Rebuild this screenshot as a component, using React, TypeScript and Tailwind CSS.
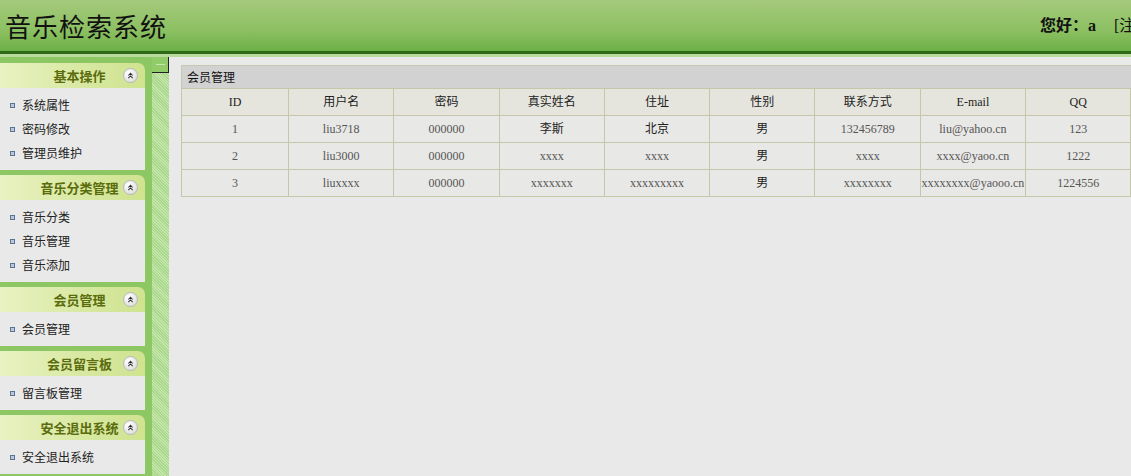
import React from 'react'

const menu = [
  { title: '基本操作', items: ['系统属性', '密码修改', '管理员维护'] },
  { title: '音乐分类管理', items: ['音乐分类', '音乐管理', '音乐添加'] },
  { title: '会员管理', items: ['会员管理'] },
  { title: '会员留言板', items: ['留言板管理'] },
  { title: '安全退出系统', items: ['安全退出系统'] },
]

// last column runs past the window edge, its header is off screen
const columns = ['ID', '用户名', '密码', '真实姓名', '住址', '性别', '联系方式', 'E-mail', 'QQ', '']

const members = [
  ['1', 'liu3718', '000000', '李斯', '北京', '男', '132456789', 'liu@yahoo.cn', '123', ''],
  ['2', 'liu3000', '000000', 'xxxx', 'xxxx', '男', 'xxxx', 'xxxx@yaoo.cn', '1222', ''],
  ['3', 'liuxxxx', '000000', 'xxxxxxx', 'xxxxxxxxx', '男', 'xxxxxxxx', 'xxxxxxxx@yaooo.cn', '1224556', ''],
]

const hasCjk = (s: string) => /[\u4e00-\u9fff]/.test(s)

// small round "collapse" button with double chevron
function CollapseIcon() {
  return (
    <span className="w-[15px] h-[15px] rounded-full border border-[#b8b8b8] bg-[radial-gradient(circle_at_35%_30%,#ffffff,#d6d6d6)] flex items-center justify-center">
      <svg width="7" height="7" viewBox="0 0 8 8" fill="none" stroke="#333" strokeWidth="1.2">
        <path d="M1.5 4 L4 1.5 L6.5 4" />
        <path d="M1.5 7 L4 4.5 L6.5 7" />
      </svg>
    </span>
  )
}

function Bullet() {
  return <span className="w-[5px] h-[5px] border border-[#5d7193] bg-[#b9c8df] shrink-0" />
}

export default function App() {
  return (
    <div className="w-[1131px] h-[476px] overflow-hidden flex flex-col bg-[#e9e9e9] font-['Noto_Sans_CJK_SC',sans-serif]">
      {/* Header */}
      <div className="h-[51px] shrink-0 bg-[linear-gradient(#a5c97c,#8cc062_60%,#6db046)] flex items-center">
        <h1 className="flex-1 pl-[5px] text-[26px] leading-none text-[#111] tracking-[1px] font-['Noto_Sans_CJK_SC',serif]">音乐检索系统</h1>
        <div className="w-[91px] shrink-0 flex items-center gap-[18px] whitespace-nowrap font-['Liberation_Serif','Noto_Sans_CJK_SC',serif] text-[16px] font-bold text-[#111]">
          <span>您好：a</span>
          <span className="font-normal">[注销]</span>
        </div>
      </div>
      <div className="h-[3px] shrink-0 bg-[#2c6a18]" />
      <div className="h-[3px] shrink-0 bg-[#b8da9a]" />

      <div className="flex flex-1 min-h-0">
        {/* Sidebar */}
        <div className="w-[152px] shrink-0 bg-[#8cc763] pt-[6px] flex flex-col gap-[5px]">
          {menu.map((group) => (
            <div key={group.title} className="w-[145px]">
              <div className="h-[25px] rounded-tr-[7px] bg-[linear-gradient(90deg,#e9f2c2,#d7e8a0_60%,#cfe390)] flex items-center relative">
                <span className="flex-1 text-center pl-[14px] text-[13px] font-bold text-[#5b6c0c]">{group.title}</span>
                <span className="absolute right-[7px] top-[5px]">
                  <CollapseIcon />
                </span>
              </div>
              <div className="bg-[#e9e9e9] py-[5px]">
                {group.items.map((it) => (
                  <div key={it} className="h-[24px] flex items-center gap-[7px] pl-[10px] text-[12px] text-[#222]">
                    <Bullet />
                    <span>{it}</span>
                  </div>
                ))}
              </div>
            </div>
          ))}
        </div>

        {/* Splitter */}
        <div className="w-[17px] shrink-0 bg-[repeating-linear-gradient(45deg,#a9d88a_0_1px,#c4e6ad_1px_2px)] flex flex-col">
          <div className="h-[16px] w-[17px] bg-[#92cc6a] border-r border-b border-[#222] flex items-center justify-center">
            <span className="w-[9px] h-[1px] bg-[#c6e8ae]" />
          </div>
        </div>

        {/* Content */}
        <div className="flex-1 min-w-0 pl-[12px] pt-[8px] overflow-hidden">
          <div className="w-[1060px]">
            <div className="h-[23px] bg-[#d2d2d2] border-t border-l border-[#c7c9ad] flex items-center pl-[5px] text-[12px] text-[#111]">
              会员管理
            </div>
            <table className="w-[1055px] table-fixed border-collapse font-['Liberation_Serif','Noto_Sans_CJK_SC',serif] text-[12px]">
              <colgroup>
                <col className="w-[107px]" />
                {columns.slice(1).map((c, i) => (
                  <col key={i} className="w-[105.3px]" />
                ))}
              </colgroup>
              <thead>
                <tr className="h-[27px] bg-[#e5e5dd]">
                  {columns.map((c, i) => (
                    <th key={i} className="border border-[#c4c7a8] font-normal text-[#222] text-center">
                      {c}
                    </th>
                  ))}
                </tr>
              </thead>
              <tbody>
                {members.map((row) => (
                  <tr key={row[0]} className="h-[27px] bg-[#e8e8e6]">
                    {row.map((cell, j) => (
                      <td
                        key={j}
                        className={`border border-[#c4c7a8] text-center ${hasCjk(cell) ? 'text-[#222]' : 'text-[#555]'}`}
                      >
                        {cell}
                      </td>
                    ))}
                  </tr>
                ))}
              </tbody>
            </table>
          </div>
        </div>
      </div>
    </div>
  )
}
